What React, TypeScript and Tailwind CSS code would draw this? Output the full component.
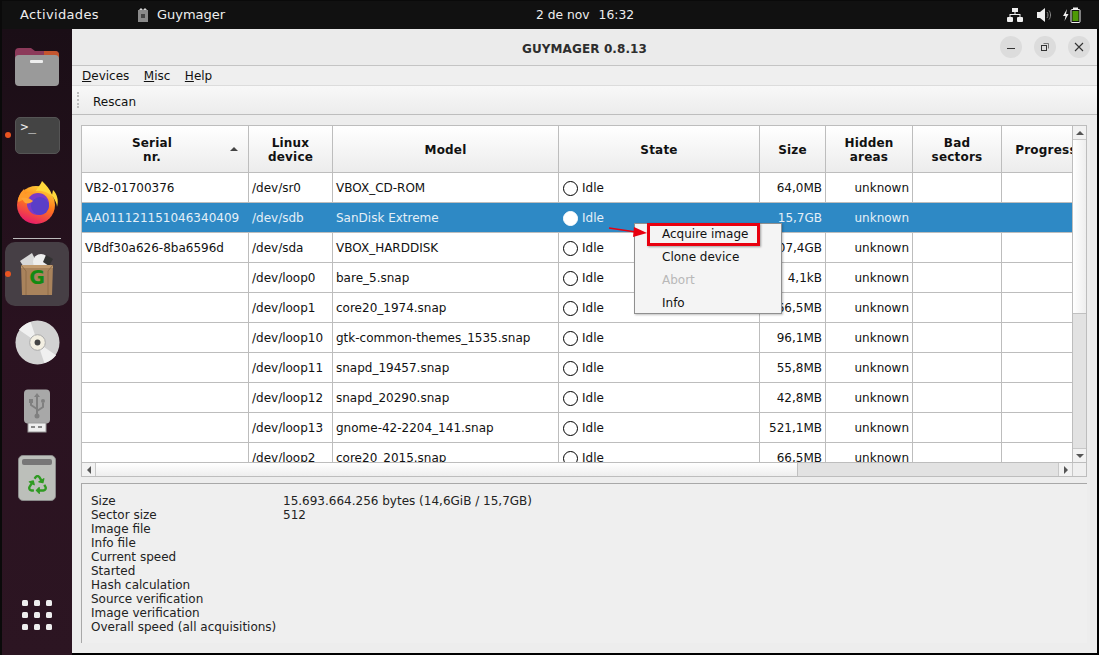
import React from "react";
import { FaRecycle } from "react-icons/fa";

const rows = [
  ["VB2-01700376", "/dev/sr0", "VBOX_CD-ROM", "64,0MB"],
  ["AA011121151046340409", "/dev/sdb", "SanDisk Extreme", "15,7GB"],
  ["VBdf30a626-8ba6596d", "/dev/sda", "VBOX_HARDDISK", "107,4GB"],
  ["", "/dev/loop0", "bare_5.snap", "4,1kB"],
  ["", "/dev/loop1", "core20_1974.snap", "66,5MB"],
  ["", "/dev/loop10", "gtk-common-themes_1535.snap", "96,1MB"],
  ["", "/dev/loop11", "snapd_19457.snap", "55,8MB"],
  ["", "/dev/loop12", "snapd_20290.snap", "42,8MB"],
  ["", "/dev/loop13", "gnome-42-2204_141.snap", "521,1MB"],
  ["", "/dev/loop2", "core20_2015.snap", "66,5MB"],
];

const details = [
  ["Size", "15.693.664.256 bytes (14,6GiB / 15,7GB)"],
  ["Sector size", "512"],
  ["Image file", ""],
  ["Info file", ""],
  ["Current speed", ""],
  ["Started", ""],
  ["Hash calculation", ""],
  ["Source verification", ""],
  ["Image verification", ""],
  ["Overall speed (all acquisitions)", ""],
];

const cols = "grid grid-cols-[167px_84px_226px_201px_66px_87px_89px_89px]";

const HeaderCell: React.FC<{ lines: string[]; sort?: boolean }> = ({ lines, sort }) => (
  <div className={`relative flex flex-col items-center justify-center pt-[2px] border-r border-[#bdbdbd] font-bold leading-[14px] tracking-[0.2px] whitespace-nowrap overflow-hidden ${sort ? "pr-[26px]" : ""}`}>
    {lines.map((l) => (
      <span key={l}>{l}</span>
    ))}
    {sort && (
      <span className="absolute right-[10px] top-[21px] w-0 h-0 border-x-[4px] border-x-transparent border-b-[4px] border-b-[#444]" />
    )}
  </div>
);

const Dock: React.FC = () => (
  <div className="w-[70px] shrink-0 flex flex-col items-center bg-gradient-to-b from-[#1a0e16] via-[#2a1220] to-[#2c1522] relative">
    {/* files */}
    <svg className="mt-[15px]" width="46" height="42" viewBox="0 0 46 42">
      <path d="M1 8a4 4 0 0 1 4-4h12l4 3h20a4 4 0 0 1 4 4v10H1z" fill="#8c3a5a" />
      <path d="M30 7h11a4 4 0 0 1 4 4v6H30z" fill="#c4552e" />
      <rect x="1" y="11" width="44" height="31" rx="4" fill="#9a9a9a" />
      <rect x="16" y="16" width="13" height="3" rx="1" fill="#eee" />
    </svg>
    {/* terminal */}
    <div className="mt-[31px] w-[45px] h-[37px] rounded-[5px] bg-[#444] border border-[#555] relative">
      <span className="absolute left-[5px] top-[1px] text-[#eee] text-[13px] leading-[16px] font-['DejaVu_Sans_Mono']">&gt;_</span>
    </div>
    <span className="absolute left-[3px] top-[103px] w-[6px] h-[6px] rounded-full bg-[#e95420]" />
    {/* firefox */}
    <svg className="mt-[26px]" width="44" height="44" viewBox="0 0 44 44">
      <defs>
        <linearGradient id="ff" x1="0.7" y1="0" x2="0.3" y2="1">
          <stop offset="0" stopColor="#ffd43a" />
          <stop offset="0.45" stopColor="#ff7a1a" />
          <stop offset="1" stopColor="#e5166e" />
        </linearGradient>
      </defs>
      <circle cx="21" cy="25" r="19" fill="url(#ff)" />
      <path d="M27 1c-2 5-5 7-6 10 6-1 14 2 17 6 2 3 4 7 4 10 2-7 0-13-4-17l-1 5C35 9 31 5 27 1z" fill="#ffd83c" />
      <path d="M3 22c0-6 3-10 6-13l1 5c2-1 5-2 8-1l-3 4z" fill="#ff9b2a" />
      <circle cx="23" cy="24" r="11" fill="#7c3ac8" />
      <circle cx="25" cy="26" r="9" fill="#5a3ec8" />
      <path d="M6 18c5-1 9 0 12 3-2 2-5 3-8 2z" fill="#ffa436" />
    </svg>
    {/* guymager, active */}
    <div className="mt-[18px] w-[64px] h-[64px] rounded-[10px] bg-[#463f45] flex items-center justify-center relative">
      <svg width="40" height="46" viewBox="0 0 40 46">
        <path d="M3 10 15 2l8 16H8z" fill="#d8d8d8" />
        <circle cx="24" cy="11" r="8" fill="#eee" />
        <path d="m29 4 7 4-4 7-6-4z" fill="#333" />
        <path d="M4 14h32l-1 30H5z" fill="#a9835c" />
        <path d="M4 14h32v3H4z" fill="#c19b70" />
        <path d="m4 14 5 6v24M36 14l-5 6v24" fill="none" stroke="#8f6d49" />
        <text x="20" y="33" textAnchor="middle" fontSize="19" fontWeight="700" fill="#128a12" fontFamily="'DejaVu Sans', sans-serif">G</text>
      </svg>
      <span className="absolute left-0 top-[29px] w-[6px] h-[6px] rounded-full bg-[#e95420]" />
    </div>
    <span className="absolute left-[11px] top-[209px] w-[48px] h-px bg-[#bbb]" />
    {/* cd */}
    <svg className="mt-[14px]" width="45" height="45" viewBox="0 0 46 46">
      <circle cx="23" cy="23" r="22.5" fill="#d2d2d2" />
      <path d="M23 23 4 10a23 23 0 0 1 12-8zM23 23l19 13a23 23 0 0 1-12 8z" fill="#f0f0f0" />
      <circle cx="23" cy="23" r="8" fill="#f3efe2" stroke="#aaa" />
      <circle cx="23" cy="23" r="3" fill="#444" />
    </svg>
    {/* usb */}
    <svg className="mt-[24px]" width="28" height="44" viewBox="0 0 28 44">
      <rect x="1" y="0.5" width="26" height="34" rx="4" fill="#a8a8a8" />
      <rect x="5" y="34" width="18" height="9" fill="#eee" stroke="#999" />
      <rect x="8" y="37" width="4" height="2" fill="#888" />
      <rect x="15" y="37" width="4" height="2" fill="#888" />
      <path d="M14 6v20M14 20l-6-4v-4M14 22l6-4v-4" fill="none" stroke="#808080" strokeWidth="2" />
      <path d="m14 4 3 4h-6z" fill="#808080" />
      <rect x="6" y="10" width="4" height="4" fill="#808080" />
      <circle cx="20" cy="12" r="2" fill="#808080" />
      <circle cx="14" cy="27" r="2.5" fill="#808080" />
    </svg>
    {/* trash */}
    <div className="mt-[22px] w-[38px] h-[46px] rounded-[5px] bg-[#bcbfba] border border-[#8a8a8a] flex flex-col items-center pt-[3px]">
      <span className="w-[30px] h-[6px] rounded-[2px] bg-[#777]" />
      <FaRecycle className="mt-[10px] text-[#2f9a22]" size={19} />
    </div>
    {/* apps grid */}
    <div className="mt-auto mb-[25px] grid grid-cols-3 gap-[6px]">
      {[...Array(9)].map((_, i) => (
        <span key={i} className="w-[6px] h-[6px] rounded-[1.5px] bg-[#eeeeee]" />
      ))}
    </div>
  </div>
);

const TopBar: React.FC = () => (
  <div className="h-[28px] shrink-0 relative flex items-center bg-[#111111] text-[#eeeeee] text-[13px] font-['DejaVu_Sans',sans-serif] pb-[1px]">
    <span className="ml-[18px] tracking-[0.35px]">Actividades</span>
    <svg className="ml-[38px]" width="12" height="16" viewBox="0 0 12 16">
      <path d="M1 3h10v12H1z" fill="#8a8a8a" />
      <path d="M2 3l2-2 2 2 2-2 2 2z" fill="#d5d5d5" />
      <rect x="4" y="7" width="4" height="4" fill="#444" />
    </svg>
    <span className="ml-[8px]">Guymager</span>
    <span className="absolute left-[534px] top-[5px] leading-[18px] whitespace-nowrap text-[12.3px]">
      2 de nov<span className="ml-[9px]">16:32</span>
    </span>
    <div className="ml-auto mr-[18px] flex items-center">
      <svg width="16" height="14" viewBox="0 0 16 14" fill="#eee">
        <rect x="5" y="0" width="6" height="4" />
        <rect x="0" y="9" width="6" height="5" rx="1" />
        <rect x="10" y="9" width="6" height="5" rx="1" />
        <path d="M7.500 4h1v2H13.500v3h-1V7h-9v2h-1V6h5z" />
      </svg>
      <svg className="ml-[14px]" width="15" height="14" viewBox="0 0 15 14">
        <path d="M0 4h3l5-4v14l-5-4H0z" fill="#eee" />
        <path d="M10 4c1.300 1.500 1.300 4.500 0 6M12 2.500c2 2.500 2 6.500 0 9" fill="none" stroke="#888" />
      </svg>
      <svg className="ml-[11px]" width="18" height="16" viewBox="0 0 18 16">
        <path d="M4 2 0 9h2.500L1.500 14 5.500 7H3z" fill="#eee" />
        <rect x="8" y="2.500" width="9" height="13" rx="1" fill="#111" stroke="#eee" />
        <rect x="10" y="0.500" width="5" height="2" fill="#eee" />
        <rect x="9.500" y="4" width="6" height="10" fill="#4e9a06" />
      </svg>
    </div>
  </div>
);

const WindowButton: React.FC<{ children: React.ReactNode }> = ({ children }) => (
  <span className="w-[22px] h-[22px] rounded-full bg-[#dcdcdc] flex items-center justify-center">{children}</span>
);

export default function App() {
  return (
    <div className="w-[1099px] h-[655px] flex flex-col bg-black overflow-hidden border-l-2 border-t border-[#0a0a0a] font-['DejaVu_Sans',sans-serif]">
      <TopBar />
      <div className="flex-1 min-h-0 flex">
        <Dock />
        <div className="flex-1 min-w-0 flex flex-col mr-[2px] mb-[2px] bg-[#ededed] text-[12px] text-[#111]">
          {/* title bar */}
          <div className="h-[37px] shrink-0 relative flex items-center justify-center pt-[4px] border-b border-[#c4c4c4] bg-[#ebebeb]">
            <span className="font-bold text-[12px] text-[#2e2e2e] tracking-[0.1px]">GUYMAGER 0.8.13</span>
            <div className="absolute right-[7px] top-[7px] flex gap-[12px]">
              <WindowButton>
                <span className="w-[8px] h-px bg-[#333] mt-[3px]" />
              </WindowButton>
              <WindowButton>
                <svg width="10" height="10" viewBox="0 0 10 10" fill="none" stroke="#333">
                  <rect x="1.500" y="3.500" width="5" height="5" />
                  <path d="M3.500 1.500h5v5" stroke="#777" />
                </svg>
              </WindowButton>
              <WindowButton>
                <svg width="10" height="10" viewBox="0 0 10 10" stroke="#333" strokeWidth="1.100">
                  <path d="M1 1l8 8M9 1l-8 8" />
                </svg>
              </WindowButton>
            </div>
          </div>
          {/* menu */}
          <div className="h-[20px] shrink-0 flex items-center gap-[14.5px] pl-[10px] border-b border-[#dcdcdc] bg-[#efefef]">
            <span><span className="underline">D</span>evices</span>
            <span><span className="underline">M</span>isc</span>
            <span><span className="underline">H</span>elp</span>
          </div>
          {/* toolbar */}
          <div className="h-[29px] shrink-0 flex items-center border-b border-[#bdbdbd] bg-gradient-to-b from-[#f8f8f8] to-[#ececec]">
            <span className="ml-[5px] w-[3px] h-[16px] border-l-2 border-dotted border-[#bdbdbd]" />
            <span className="ml-[13px] pt-[4px]">Rescan</span>
          </div>
          {/* table */}
          <div className="relative mt-[10px] ml-[9px] mr-[10px] h-[352px] shrink-0 border border-[#bdbdbd] bg-white flex flex-col">
            <div className="flex-1 min-h-0 flex">
              <div className="flex-1 min-w-0 flex flex-col overflow-hidden">
                <div className={`${cols} h-[47px] shrink-0 border-b border-[#bdbdbd] bg-gradient-to-b from-white to-[#ececec]`}>
                  <HeaderCell lines={["Serial", "nr."]} sort />
                  <HeaderCell lines={["Linux", "device"]} />
                  <HeaderCell lines={["Model"]} />
                  <HeaderCell lines={["State"]} />
                  <HeaderCell lines={["Size"]} />
                  <HeaderCell lines={["Hidden", "areas"]} />
                  <HeaderCell lines={["Bad", "sectors"]} />
                  <HeaderCell lines={["Progress"]} />
                </div>
                <div className="flex-1 min-h-0 overflow-hidden">
                  {rows.map((r, i) => {
                    const selected = i === 1;
                    const line = selected ? "border-[#2e89c5]" : "border-[#bdbdbd]";
                    return (
                      <div
                        key={r[1]}
                        className={`${cols} h-[30px] border-b ${selected ? "bg-[#2e89c5] text-[#e4eff7] border-[#bdbdbd]" : "border-[#bdbdbd]"}`}
                      >
                        <div className={`border-r ${line} pl-[3px] pt-[1px] flex items-center whitespace-nowrap overflow-hidden`}>{r[0]}</div>
                        <div className={`border-r ${line} pl-[3px] pt-[1px] flex items-center whitespace-nowrap`}>{r[1]}</div>
                        <div className={`border-r ${line} pl-[3px] pt-[1px] flex items-center whitespace-nowrap`}>{r[2]}</div>
                        <div className={`border-r ${line} pl-[4px] pt-[1px] flex items-center gap-[4px]`}>
                          <span className={`w-[15px] h-[15px] rounded-full border ${selected ? "bg-white border-white" : "bg-white border-black"}`} />
                          <span>Idle</span>
                        </div>
                        <div className={`border-r ${line} pr-[3px] pt-[1px] flex items-center justify-end whitespace-nowrap`}>{r[3]}</div>
                        <div className={`border-r ${line} pr-[3px] pt-[1px] flex items-center justify-end`}>unknown</div>
                        <div className={`border-r ${line}`} />
                        <div className={`border-r ${line}`} />
                      </div>
                    );
                  })}
                </div>
              </div>
              {/* vertical scrollbar */}
              <div className="w-[14px] shrink-0 flex flex-col border-l border-[#bdbdbd] bg-[#e2e2e2]">
                <div className="h-[14px] shrink-0 bg-[#f2f2f2] border-b border-[#c8c8c8] flex items-center justify-center">
                  <span className="w-0 h-0 border-x-[4px] border-x-transparent border-b-[4px] border-b-[#555]" />
                </div>
                <div className="h-[174px] shrink-0 bg-gradient-to-r from-white to-[#eeeeee] border-b border-[#c0c0c0]" />
                <div className="flex-1" />
                <div className="h-[14px] shrink-0 bg-[#f2f2f2] border-t border-[#c8c8c8] flex items-center justify-center">
                  <span className="w-0 h-0 border-x-[4px] border-x-transparent border-t-[4px] border-t-[#555]" />
                </div>
              </div>
            </div>
            {/* horizontal scrollbar */}
            <div className="h-[14px] shrink-0 flex border-t border-[#bdbdbd] bg-[#e2e2e2]">
              <div className="w-[14px] shrink-0 bg-[#f2f2f2] border-r border-[#c8c8c8] flex items-center justify-center">
                <span className="w-0 h-0 border-y-[4px] border-y-transparent border-r-[4px] border-r-[#555]" />
              </div>
              <div className="w-[702px] shrink-0 bg-gradient-to-b from-white to-[#eeeeee] border-r border-[#c0c0c0]" />
              <div className="flex-1" />
              <div className="w-[14px] shrink-0 bg-[#f2f2f2] border-l border-[#c8c8c8] flex items-center justify-center">
                <span className="w-0 h-0 border-y-[4px] border-y-transparent border-l-[4px] border-l-[#555]" />
              </div>
              <div className="w-[14px] shrink-0 bg-[#efefef] border-l border-[#c8c8c8]" />
            </div>
          </div>
          {/* details */}
          <div className="mt-[6px] ml-[9px] mr-[10px] h-[160px] shrink-0 border-l border-t border-[#a8a8a8] bg-[#efefef] pt-[10px] pl-[9px] leading-[14px] text-[#222]">
            {details.map(([k, v]) => (
              <div key={k} className="grid grid-cols-[192px_1fr] h-[14px] whitespace-nowrap">
                <span>{k}</span>
                <span>{v}</span>
              </div>
            ))}
          </div>
        </div>
      </div>

      {/* context menu */}
      <div className="absolute left-[634px] top-[223px] w-[148px] h-[91px] bg-[#f4f4f4] border border-[#8f8f8f] shadow-[1px_1px_2px_rgba(0,0,0,0.25)] text-[12px] text-[#111]">
        {["Acquire image", "Clone device", "Abort", "Info"].map((m) => (
          <div key={m} className={`h-[23px] pl-[27px] pb-[3px] flex items-center ${m === "Abort" ? "text-[#b8b8b8]" : ""}`}>
            {m}
          </div>
        ))}
      </div>
      <div className="absolute left-[647px] top-[223px] w-[113px] h-[23px] border-[3px] border-[#e8000f] shadow-[1px_1px_2px_rgba(0,0,0,0.35)]" />
      <svg className="absolute left-[608px] top-[226px]" width="40" height="12" viewBox="0 0 40 12">
        <path d="M1 2 28 6" stroke="#e8000f" strokeWidth="1.500" />
        <path d="m26 1 13 6-14 4z" fill="#e8000f" />
      </svg>
    </div>
  );
}
